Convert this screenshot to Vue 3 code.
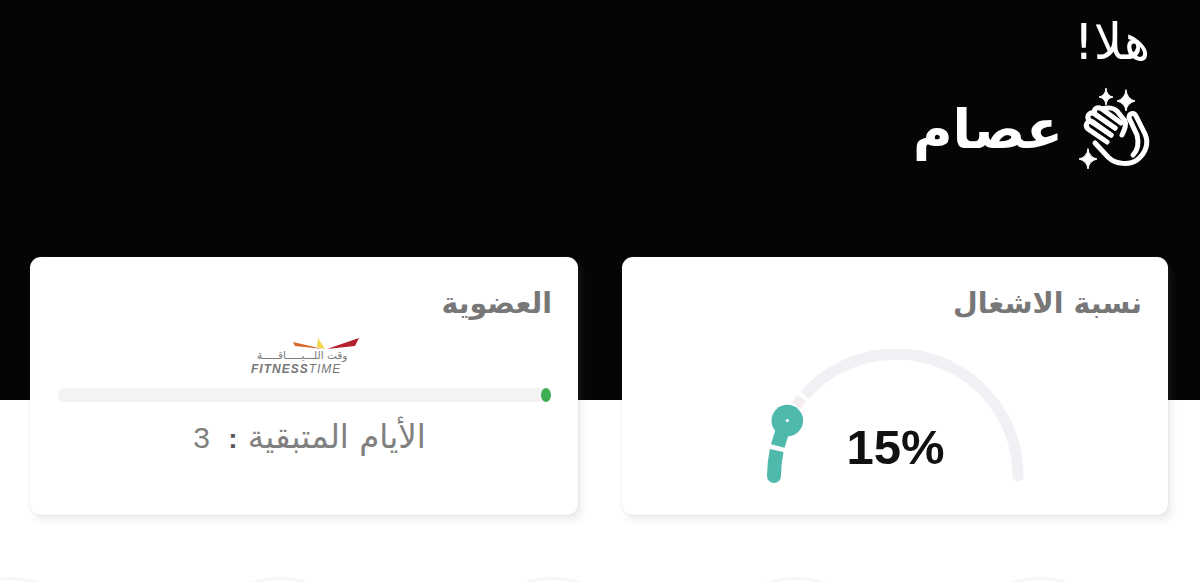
<script setup>
const cx = 135, cy = 127, r = 122
function arc(from, to) {
  const p = (v) => {
    const a = Math.PI * v / 100
    return `${(cx - r * Math.cos(a)).toFixed(2)} ${(cy - r * Math.sin(a)).toFixed(2)}`
  }
  return `M${p(from)} A${r} ${r} 0 0 1 ${p(to)}`
}
const knobAngle = Math.PI * 15 / 100
const knob = { x: cx - r * Math.cos(knobAngle), y: cy - r * Math.sin(knobAngle) }
const track = arc(23, 100)
const blush = arc(19.500, 22)
const tealLow = arc(0, 6.700)
const tealHigh = arc(7.900, 15)
const circles = [1, 2, 3, 4, 5]
</script>

<template>
  <div class="page">
    <header class="hero">
      <p class="hello">هلا!</p>
      <div class="name-row">
        <svg class="clap" viewBox="0 0 90 85" fill="none" stroke="#fff" stroke-width="5" stroke-linecap="round" stroke-linejoin="round">
          <path d="M25 58 L38 72 C46 80 60 80 67 75 C76 68 79 58 75 49 L66 31 C64 27 59 28 59 33 L67 50 C69 58 68 65 63 70" />
          <path d="M37 57 L18 44 C14 40 18 34 23 37 L41 50" />
          <path d="M41 50 L20 36 C15 31 20 26 25 29 L45 43" />
          <path d="M45 43 L26 30 C22 25 26 21 32 24 L51 38" />
          <path d="M32 24 C38 22 44 23 47 26 L55 36 C57 40 54 46 52 50" />
          <path d="M36 3.500 Q36.700 10.800 43 12 Q36.700 13.200 36 20 Q35.300 13.200 29 12 Q35.300 10.800 36 3.500Z" fill="#fff" stroke-width="1" />
          <path d="M56 5 Q57 14 65 16 Q57 18 56 26 Q55 18 47 16 Q55 14 56 5Z" fill="#fff" stroke-width="1" />
          <path d="M18 64 Q19 72 27 74 Q19 76 18 84 Q17 76 9 74 Q17 72 18 64Z" fill="#fff" stroke-width="1" />
        </svg>
        <h1 class="name">عصام</h1>
      </div>
    </header>

    <section class="cards">
      <article class="card">
        <h2 class="card-title">نسبة الاشغال</h2>
        <div class="gauge">
          <svg class="gauge-svg" viewBox="0 0 270 150" fill="none">
            <path :d="track" stroke="#f0f0f5" stroke-width="11" />
            <circle :cx="cx + r" :cy="cy" r="5.500" fill="#f0f0f5" />
            <path :d="blush" stroke="#f5eef0" stroke-width="11" />
            <path :d="tealLow" stroke="#4fb9ab" stroke-width="14" />
            <circle :cx="cx - r" :cy="cy" r="7" fill="#4fb9ab" />
            <path :d="tealHigh" stroke="#4fb9ab" stroke-width="14" />
            <circle :cx="knob.x" :cy="knob.y" r="15.800" fill="#4fb9ab" />
            <circle :cx="knob.x" :cy="knob.y" r="1.500" fill="#fff" />
          </svg>
          <span class="percent">15%</span>
        </div>
      </article>

      <article class="card">
        <h2 class="card-title">العضوية</h2>
        <div class="logo">
          <svg class="logo-mark" viewBox="0 0 108 13">
            <polygon points="42,5 72,12 44,9" fill="#d9682a" />
            <polygon points="67,1 74,12 66,10" fill="#f0d848" />
            <polygon points="108,1 76,12 104,9" fill="#b3202e" />
          </svg>
          <span class="logo-ar">وقت اللـــيـــــاقـــــة</span>
          <span class="logo-en"><b>FITNESS</b>TIME</span>
        </div>
        <div class="bar"><span class="bar-dot"></span></div>
        <p class="days">الأيام المتبقية <span class="days-colon">:</span> <span class="days-num">3</span></p>
      </article>
    </section>

    <div class="circles">
      <span v-for="c in circles" :key="c" class="circle"></span>
    </div>
  </div>
</template>

<style scoped>
.page {
  height: 582px;
  overflow: hidden;
  background: #fff;
  font-family: "DejaVu Sans", "Liberation Sans", sans-serif;
  direction: rtl;
}
.hero {
  height: 400px;
  box-sizing: border-box;
  background: #050505;
  color: #fff;
  padding: 12px 40px 0 0;
}
.hello {
  margin: 0 10px 0 0;
  font-size: 50px;
  line-height: 60px;
  text-align: right;
}
.name-row {
  display: flex;
  align-items: center;
  gap: 7px;
  margin-top: 13px;
}
.clap {
  width: 90px;
  height: 85px;
  flex: none;
}
.name {
  margin: 4px 0 0;
  font-size: 54px;
  line-height: 70px;
  font-weight: 700;
}
.cards {
  display: grid;
  grid-template-columns: 546px 548px;
  gap: 44px;
  padding: 0 32px 0 30px;
  margin-top: -143px;
}
.card {
  height: 258px;
  box-sizing: border-box;
  background: #fff;
  border-radius: 11px;
  padding: 27px 27px 0 28px;
  box-shadow: 0 0 2px rgba(120, 120, 150, 0.25), 4px 6px 6px rgba(120, 120, 150, 0.12);
}
.card-title {
  margin: 0 -1px 0 0;
  font-size: 28.500px;
  line-height: 40px;
  color: #777;
  font-weight: 700;
}
.gauge {
  position: relative;
  width: 270px;
  height: 150px;
  margin: 25px auto 0;
}
.gauge-svg {
  display: block;
  width: 270px;
  height: 150px;
}
.percent {
  position: absolute;
  left: 86px;
  top: 70px;
  direction: ltr;
  font-family: "Liberation Sans", sans-serif;
  font-weight: 700;
  font-size: 49px;
  line-height: 56px;
  color: #111;
}
.logo {
  display: flex;
  flex-direction: column;
  align-items: flex-end;
  width: 108px;
  height: 38px;
  margin-top: 13px;
  margin-inline-start: 192px;
}
.logo-mark {
  width: 108px;
  height: 13px;
  flex: none;
  margin-bottom: -1px;
}
.logo-ar {
  font-size: 10.500px;
  line-height: 13px;
  color: #777;
  margin-left: 6px;
}
.logo-en {
  direction: ltr;
  font-family: "Liberation Sans", sans-serif;
  font-size: 12px;
  line-height: 14px;
  letter-spacing: 1px;
  font-style: italic;
  color: #777;
}
.bar {
  position: relative;
  height: 14px;
  margin-top: 13px;
  background: #f3f3f3;
  border-radius: 7px;
}
.bar-dot {
  position: absolute;
  right: 0;
  top: 0;
  width: 10px;
  height: 14px;
  border-radius: 50%;
  background: #3fae55;
}
.days {
  margin: 14px 0 0;
  padding-left: 10px;
  text-align: center;
  font-size: 32.500px;
  line-height: 42px;
  color: #808080;
}
.days-colon {
  color: #555;
  font-family: "Liberation Sans", sans-serif;
  font-weight: 700;
  font-size: 28px;
}
.days-num {
  margin-inline-start: 8px;
  font-family: "Liberation Sans", sans-serif;
  font-size: 30px;
}
.circles {
  direction: ltr;
  display: flex;
  margin: 62px 0 0 -80px;
}
.circle {
  flex: none;
  width: 180px;
  height: 180px;
  box-sizing: border-box;
  border: 3px solid #f6f6f9;
  border-radius: 50%;
  margin-right: 63px;
}
.circle:nth-child(1) { margin-right: 90px; }
.circle:nth-child(2) { margin-right: 93px; }
</style>

<style>
html, body { margin: 0; background: #fff; }
</style>
